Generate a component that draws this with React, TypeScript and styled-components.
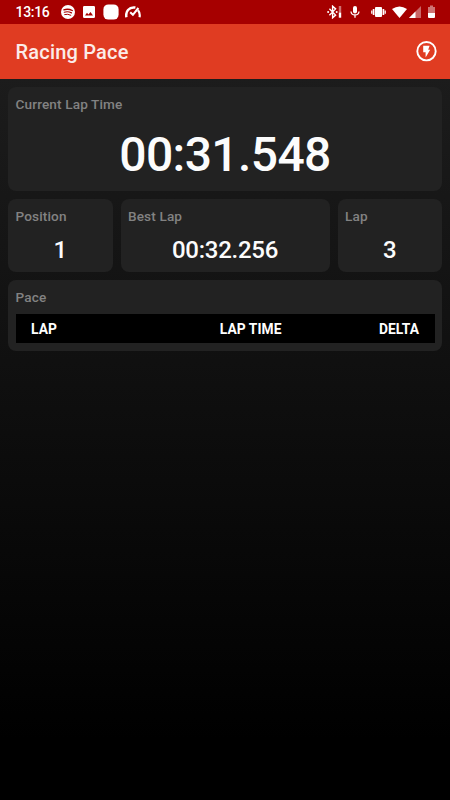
import React from "react";
import styled, { createGlobalStyle } from "styled-components";

const GlobalStyle = createGlobalStyle`
  * { box-sizing: border-box; }
  html, body { margin: 0; background: #000; }
  body { font-family: Roboto, "Liberation Sans", sans-serif; }
`;

const Screen = styled.div`
  display: flex;
  flex-direction: column;
  width: 450px;
  height: 800px;
  overflow: hidden;
  background: linear-gradient(to bottom, #1c1c1c 78px, #000 740px);
`;

const StatusBar = styled.header`
  display: flex;
  align-items: center;
  justify-content: space-between;
  flex: none;
  height: 23.5px;
  padding: 0 15.5px;
  background: #a60000;
  color: #fff;
`;

const StatusGroup = styled.div`
  display: flex;
  align-items: center;
`;

const Clock = styled.span`
  width: 45px;
  font-size: 14px;
  line-height: 24px;
  font-weight: 500;
  letter-spacing: -0.3px;
`;

const Glyph = styled.svg<{ $w: number; $h: number; $gap?: number }>`
  display: block;
  flex: none;
  width: ${(p) => p.$w}px;
  height: ${(p) => p.$h}px;
  margin-left: ${(p) => p.$gap ?? 0}px;
  fill: currentColor;
`;

const AppBar = styled.div`
  display: flex;
  align-items: center;
  justify-content: space-between;
  flex: none;
  height: 55px;
  padding: 0 13px 0 15.5px;
  background: #e03c22;
  color: #fff;
`;

const Title = styled.h1`
  margin: 2px 0 0;
  font-size: 20px;
  line-height: 26px;
  font-weight: 500;
  letter-spacing: 0.2px;
  color: #fbece9;
`;

const Content = styled.main`
  display: flex;
  flex-direction: column;
  gap: 8px;
  padding: 8px;
`;

const StatRow = styled.div`
  display: grid;
  grid-template-columns: 1fr 2fr 1fr;
  gap: 8px;
`;

const Card = styled.section<{ $height: number }>`
  display: flex;
  flex-direction: column;
  height: ${(p) => p.$height}px;
  padding: 8px 7.5px;
  border-radius: 8px;
  background: #222;
`;

const Label = styled.h2`
  margin: 0;
  font-size: 13.6px;
  line-height: 19px;
  font-weight: 500;
  letter-spacing: 0.13px;
  color: #828282;
`;

const Value = styled.div<{ $large?: boolean }>`
  margin-top: ${(p) => (p.$large ? 13 : 9)}px;
  font-size: ${(p) => (p.$large ? 48 : 24)}px;
  line-height: ${(p) => (p.$large ? 56 : 30)}px;
  font-weight: 500;
  letter-spacing: ${(p) => (p.$large ? -0.6 : -0.25)}px;
  text-align: center;
  color: #fcfcfc;
`;

const TableHead = styled.div`
  display: grid;
  grid-template-columns: 80px 170.5px 1fr;
  align-items: center;
  height: 30px;
  margin-top: 7px;
  padding: 1px 15.5px 0;
  background: #000;
`;

const HeadCell = styled.span<{ $align?: string }>`
  font-size: 13.8px;
  line-height: 20px;
  font-weight: 700;
  letter-spacing: 0.05px;
  text-align: ${(p) => p.$align ?? "left"};
  color: #fff;
`;

const Stat = ({ label, value }: { label: string; value: string }) => (
  <Card $height={73}>
    <Label>{label}</Label>
    <Value>{value}</Value>
  </Card>
);

const LeftIcons = () => (
  <StatusGroup>
    <Glyph $w={14} $h={14} viewBox="0 0 14 14">
      <circle cx="7" cy="7" r="7" />
      <g fill="none" stroke="#a60000" strokeLinecap="round">
        <path d="M2.9 4.8Q7.2 3.4 11.3 5.5" strokeWidth="1.4" />
        <path d="M3.3 7.2Q7 6 10.5 7.9" strokeWidth="1.2" />
        <path d="M3.7 9.5Q6.8 8.6 9.8 10.2" strokeWidth="1" />
      </g>
    </Glyph>
    <Glyph $w={12} $h={12} $gap={8.5} viewBox="0 0 12 12">
      <path
        fillRule="evenodd"
        d="M1.3 0H10.7Q12 0 12 1.3V10.7Q12 12 10.7 12H1.3Q0 12 0 10.7V1.3Q0 0 1.3 0ZM2 9.5H10L7.5 5.9 5.4 8.4 4 6.8Z"
      />
    </Glyph>
    <Glyph $w={16} $h={16} $gap={8} viewBox="0 0 16 16">
      <rect x=".4" y=".4" width="15.2" height="15.2" rx="5" />
    </Glyph>
    <Glyph $w={16} $h={14} $gap={6} viewBox="0 0 16 14">
      <g fill="none" stroke="#fff">
        <path d="M1.4 12.3Q.6 7.7 3 5Q5.8 1.8 10.4 2.6" strokeWidth="2.5" />
        <path d="M13 5.3Q15.4 8.3 14.5 12.3" strokeWidth="2.2" />
        <path d="M5.2 7.2L7.9 9.8L13.4 3" strokeWidth="2.1" />
      </g>
    </Glyph>
  </StatusGroup>
);

const RightIcons = () => (
  <StatusGroup>
    <Glyph $w={15} $h={14} viewBox="0 0 15 14">
      <path
        d="M2.4 3.8L8.6 10.1L5.6 12.8V1.2L8.6 3.9L2.4 10.2"
        fill="none"
        stroke="#fff"
        strokeWidth="1.4"
      />
      <circle cx="1.1" cy="7" r="1" />
      <circle cx="9.7" cy="7" r="1" />
      <rect x="11.8" y="1" width="2.4" height="6.5" opacity=".45" />
      <rect x="11.8" y="7.5" width="2.4" height="5.2" />
    </Glyph>
    <Glyph $w={10} $h={14} $gap={8} viewBox="0 0 10 14">
      <rect x="3" y="1" width="4" height="7.6" rx="2" />
      <path d="M1 6.5Q1.2 10 5 10Q8.8 10 9 6.5M5 10V12.8" fill="none" stroke="#fff" strokeWidth="1.3" />
    </Glyph>
    <Glyph $w={15} $h={12} $gap={11.5} viewBox="0 0 15 12">
      <rect x="4" y="1" width="7" height="10" rx="1" />
      <path d="M2.6 3V9M12.4 3V9" stroke="#fff" strokeWidth="1.7" />
      <path d="M.8 4.5V7.7M14.2 4.5V7.7" stroke="#fff" strokeWidth="1.3" />
    </Glyph>
    <Glyph $w={15} $h={12} $gap={6} viewBox="0 0 15 12">
      <path d="M0 3Q7.5-2.2 15 3L7.5 12Z" />
    </Glyph>
    <Glyph $w={12} $h={12} $gap={1.5} viewBox="0 0 12 12">
      <path d="M0 12L12 0V12Z" opacity=".4" />
      <path d="M0 12L6.5 5.5V12Z" />
    </Glyph>
    <Glyph $w={7} $h={13} $gap={7} viewBox="0 0 7 13">
      <path d="M0 2H2V.5H5V2H7V8H0Z" opacity=".45" />
      <path d="M0 8H7V12Q7 13 6 13H1Q0 13 0 12Z" />
    </Glyph>
  </StatusGroup>
);

export default function App() {
  return (
    <>
      <GlobalStyle />
      <Screen>
        <StatusBar>
          <StatusGroup>
            <Clock>13:16</Clock>
            <LeftIcons />
          </StatusGroup>
          <RightIcons />
        </StatusBar>
        <AppBar>
          <Title>Racing Pace</Title>
          <Glyph $w={21} $h={21} viewBox="0 0 21 21">
            <circle cx="10.5" cy="10.2" r="9.2" fill="none" stroke="#fff" strokeWidth="1.9" />
            <path d="M7.2 4.8H13.6L12.2 8.8H14.2L9.6 16.6V11.2H7.2Z" />
          </Glyph>
        </AppBar>
        <Content>
          <Card $height={104}>
            <Label>Current Lap Time</Label>
            <Value $large>00:31.548</Value>
          </Card>
          <StatRow>
            <Stat label="Position" value="1" />
            <Stat label="Best Lap" value="00:32.256" />
            <Stat label="Lap" value="3" />
          </StatRow>
          <Card $height={71.5}>
            <Label>Pace</Label>
            <TableHead>
              <HeadCell>LAP</HeadCell>
              <HeadCell $align="right">LAP TIME</HeadCell>
              <HeadCell $align="right">DELTA</HeadCell>
            </TableHead>
          </Card>
        </Content>
      </Screen>
    </>
  );
}
